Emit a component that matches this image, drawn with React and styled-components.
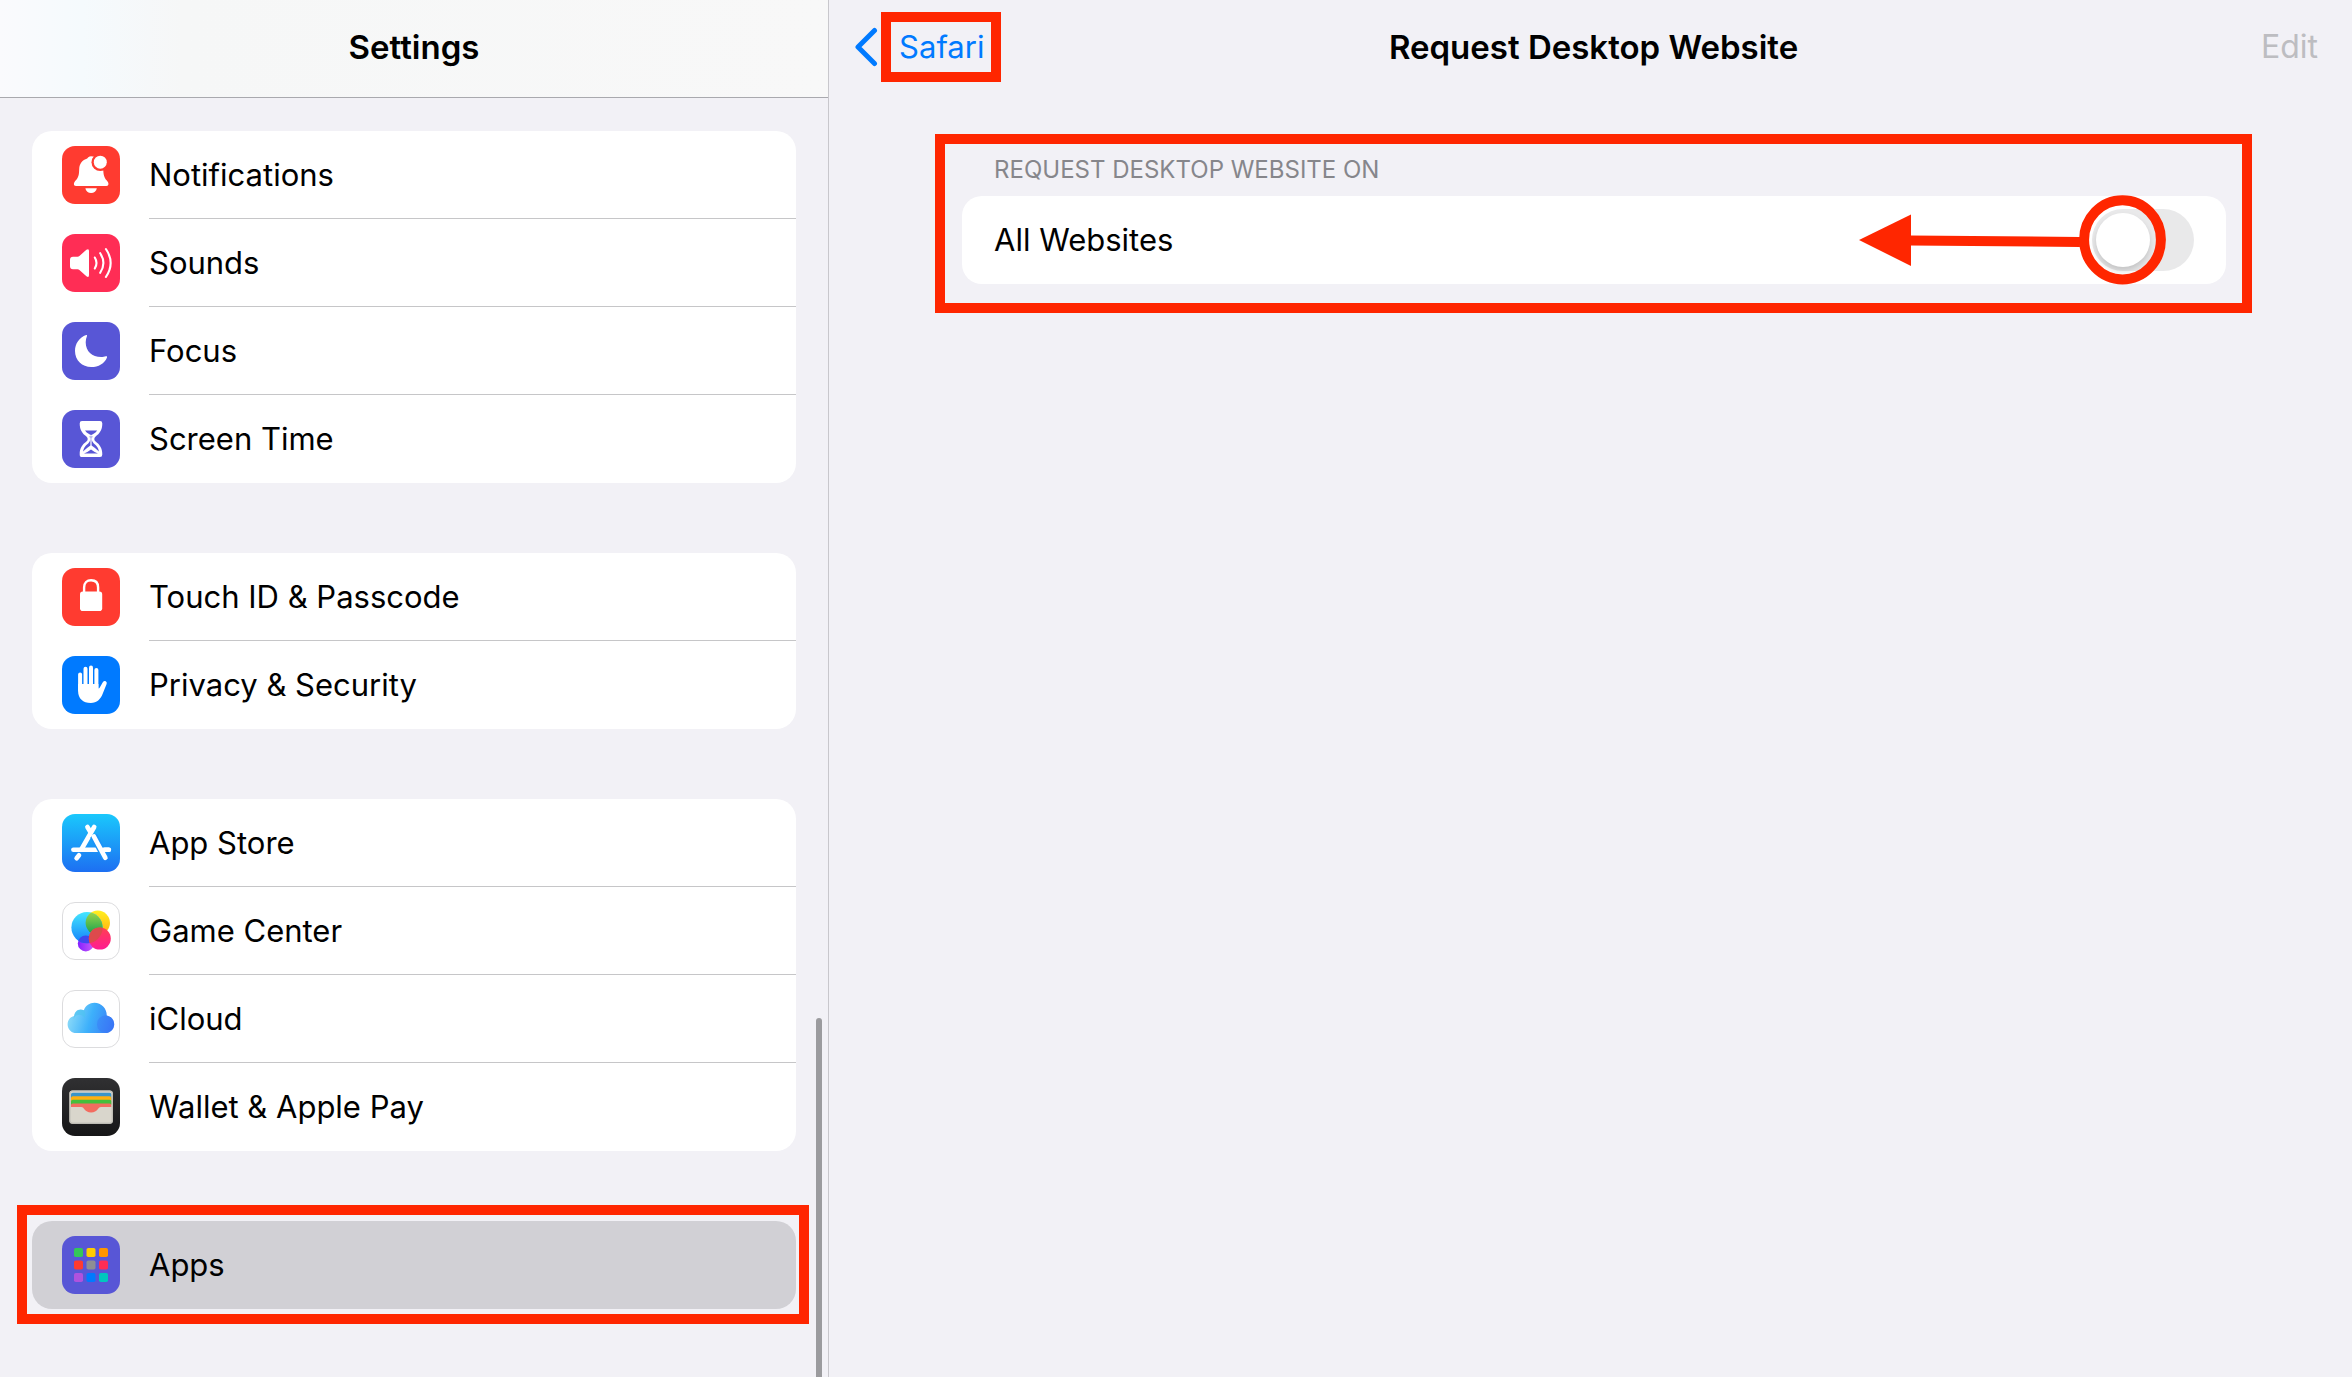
import React, { useState } from 'react'
import styled, { createGlobalStyle } from 'styled-components'

const GlobalStyle = createGlobalStyle`
    * {
        box-sizing: border-box;
    }

    body {
        margin: 0;
        background: #f2f1f6;
        color: #000;
        font-family: Inter, 'Liberation Sans', sans-serif;
        font-size: 31px;
        line-height: 40px;
    }
`

const Page = styled.div`
    display: flex;
    min-height: 100vh;
`

const Sidebar = styled.aside`
    position: relative;
    flex: 0 0 35.25%;
    border-right: 1px solid #c8c7cc;
`

const SidebarHeader = styled.header`
    display: flex;
    align-items: center;
    justify-content: center;
    height: 98px;
    padding-bottom: 4px;
    border-bottom: 1px solid #a9a9ae;
    background: linear-gradient(90deg, #fafafd 0%, #f5fafd 10%, #f6f7f7 22%, #f8f8f8 100%);
`

const Title = styled.h1`
    margin: 0;
    font-size: 33px;
    font-weight: 600;
    line-height: 40px;
`

const Menu = styled.nav`
    display: flex;
    flex-direction: column;
    gap: 70px;
    padding: 33px 32px 68px;
`

const Group = styled.ul`
    position: relative;
    margin: 0;
    padding: 0;
    list-style: none;
    border-radius: 20px;
    background: ${props => (props.$selected ? '#d1d0d5' : '#fff')};
`

const ItemLink = styled.a`
    display: flex;
    align-items: center;
    gap: 29px;
    height: 88px;
    padding-left: 30px;
    color: inherit;
    text-decoration: none;
`

const ItemLabel = styled.span`
    display: flex;
    flex: 1;
    align-items: center;
    align-self: stretch;
    border-bottom: ${props => (props.$last ? '0' : '1px solid #c6c6c8')};
`

const IconBox = styled.svg`
    flex: none;
    width: 58px;
    height: 58px;
`

const ScrollThumb = styled.div`
    position: absolute;
    top: 1018px;
    right: 6px;
    bottom: 0;
    width: 6px;
    border-radius: 3px 3px 0 0;
    background: #9b9b9e;
`

const Main = styled.main`
    flex: 1;
    min-width: 0;
`

const Toolbar = styled.header`
    display: grid;
    grid-template-columns: 1fr auto 1fr;
    align-items: center;
    height: 94px;
    padding: 0 34px 0 40px;
`

const BackLink = styled.a`
    display: flex;
    align-items: center;
    justify-self: start;
    gap: 20px;
    margin-left: -14px;
    color: #007aff;
    text-decoration: none;
`

const Chevron = styled.svg`
    width: 24px;
    height: 40px;
`

const Marked = styled.span`
    position: relative;
`

const EditButton = styled.button`
    justify-self: end;
    padding: 0;
    border: 0;
    background: none;
    font: inherit;
    font-size: 32px;

    &:disabled {
        color: #bdbdc1;
    }
`

const Section = styled.section`
    position: relative;
    margin: 60px 126px 0 133px;
`

const SectionTitle = styled.h2`
    margin: 0;
    padding: 0 32px 10px;
    color: #86868b;
    font-size: 24px;
    font-weight: 400;
    line-height: 32px;
    text-transform: uppercase;
`

const Card = styled.div`
    position: relative;
    display: flex;
    align-items: center;
    justify-content: space-between;
    height: 88px;
    padding: 0 32px;
    border-radius: 20px;
    background: #fff;
`

const Switch = styled.input`
    appearance: none;
    width: 102px;
    height: 62px;
    margin: 0;
    padding: 4px;
    border-radius: 31px;
    background: ${props => (props.checked ? '#34c759' : '#e9e9ea')};

    &::before {
        content: '';
        display: block;
        width: 54px;
        height: 54px;
        margin-left: ${props => (props.checked ? '40px' : '0')};
        border-radius: 50%;
        background: #fff;
        box-shadow: 0 4px 6px rgba(0, 0, 0, 0.16);
    }
`

// red box drawn over the part that the reader has to tap
const Highlight = styled.span`
    position: absolute;
    inset: ${props => props.$inset};
    border: 10px solid #ff2600;
    pointer-events: none;
`

const SwipeArrow = styled.svg`
    position: absolute;
    top: -1px;
    right: 60px;
    width: 308px;
    height: 90px;
    pointer-events: none;
`

const Icon = ({ color, children }) => (
    <IconBox viewBox="0 0 58 58" aria-hidden="true">
        <rect width="58" height="58" rx="13" fill={color} />
        {children}
    </IconBox>
)

const BellIcon = () => (
    <Icon color="#ff3b30">
        <path
            fill="#fff"
            d="M29 10.2C27 10.2 26 11.2 25.2 12.6C20.4 14 17.4 18 17.2 23C17 29 16.6 31.4 13.6 34.6C11.4 37 11.2 40 14 40H44.4C47.2 40 47 37 44.8 34.6C42 31.4 41.5 29 41.2 23L38 12L31 10.4Z"
        />
        <path fill="#fff" d="M23.4 42.3H34.8C34.4 45.2 32 47 29.1 47C26.2 47 23.8 45.2 23.4 42.3Z" />
        <circle cx="38.3" cy="16.2" r="8.8" fill="#ff3b30" />
        <circle cx="38.3" cy="16.2" r="6.5" fill="#fff" />
    </Icon>
)

const SpeakerIcon = () => (
    <Icon color="#ff2d55">
        <path
            fill="#fff"
            d="M11 22.7H15.6Q16.6 22.7 17.4 22L24.4 15.8Q27 14 27 17V41Q27 44 24.4 42.2L17.4 36Q16.6 35.2 15.6 35.2H11Q8 35.2 8 32.2V25.7Q8 22.7 11 22.7Z"
        />
        <g fill="none" stroke="#fff" strokeWidth="2.1" strokeLinecap="round">
            <path d="M32.8 23.5Q36.2 29 32.8 34.5" />
            <path d="M38.2 19.2Q44.6 29 38.2 38.8" />
            <path d="M43.9 15Q53.4 29 43.9 43" />
        </g>
    </Icon>
)

const MoonIcon = () => (
    <Icon color="#5856d6">
        <path
            fill="#fff"
            d="M24.2 13.1C17.3 15.6 13 21.8 13 29C13 38.3 20.2 45 29.2 45C36.4 45 42.6 41.4 45 35.4C45.3 34.5 44.8 34 43.9 34.3C42.6 34.8 40.8 35 39.2 35C30 35 23.7 29.2 23.7 20.2C23.7 18 24.2 16 25 14C25.2 13.2 24.9 12.9 24.2 13.1Z"
        />
    </Icon>
)

const HourglassIcon = () => (
    <Icon color="#5856d6">
        <path
            fill="#fff"
            d="M20 11H38Q40.3 11 40.3 13.4C40.3 20 37.6 23.4 33.6 26.4Q31 29 33.6 31.6C37.6 34.6 40.3 38 40.3 44.4Q40.3 47 38 47H20Q17.7 47 17.7 44.4C17.7 38 20.4 34.6 24.4 31.6Q27 29 24.4 26.4C20.4 23.4 17.7 20 17.7 13.4Q17.7 11 20 11Z"
        />
        <path fill="#5856d6" d="M23 20.4H35.2Q34 22.4 30.8 24.2Q29.8 24.8 29.1 25Q28.4 24.8 27.4 24.2Q24.2 22.4 23 20.4Z" />
        <path
            fill="#5856d6"
            d="M28.4 25.4V35.4Q25 37.6 21 41.6Q21.6 36.6 26.2 33.4Q29.4 30.6 27.6 26.6ZM29.6 25.4V35.4Q33 37.6 37 41.6Q36.4 36.6 31.8 33.4Q28.6 30.6 30.4 26.6Z"
        />
        <path fill="#5856d6" d="M22 43.4Q25.6 42.4 29 39.6Q32.4 42.4 36 43.4Z" />
    </Icon>
)

const LockIcon = () => (
    <Icon color="#ff3b30">
        <rect x="18" y="23.6" width="22.2" height="19.4" rx="2.8" fill="#fff" />
        <path d="M22.1 25V19.4C22.1 14.6 25 12.2 29.1 12.2C33.2 12.2 36.1 14.6 36.1 19.4V25" fill="none" stroke="#fff" strokeWidth="2.4" />
    </Icon>
)

const HandIcon = () => (
    <Icon color="#007aff">
        <g fill="none" stroke="#fff" strokeWidth="4" strokeLinecap="round">
            <path d="M18.1 18.4V34" />
            <path d="M23.5 12.8V32" />
            <path d="M29 11.4V32" />
            <path d="M34.4 14V34" />
        </g>
        <path
            fill="#fff"
            d="M16.1 28H36.4V32.2Q37.2 32.8 37.8 31.6L40.8 26.2Q42 24.4 43.8 25.2Q45.3 26.2 44.6 28L40.8 37.6C38.4 43.6 35 47 28.8 47C21 47 16.1 42.6 16.1 35Z"
        />
    </Icon>
)

const AppStoreIcon = () => (
    <Icon color="url(#storeFill)">
        <defs>
            <linearGradient id="storeFill" x1="0" y1="0" x2="0" y2="1">
                <stop offset="0" stopColor="#1ac8fc" />
                <stop offset="1" stopColor="#1d6ff2" />
            </linearGradient>
        </defs>
        <g fill="none" stroke="#fff" strokeWidth="4.6" strokeLinecap="round">
            <path d="M11.4 35.8H46.8" />
            <path d="M25.4 13L28.4 18" />
            <path d="M32.2 13L19.6 35" />
            <path d="M17 41.2L14.6 44.2" />
        </g>
        <path d="M31.6 21.8L43.4 43.8" fill="none" stroke="#1c93f8" strokeWidth="7.6" />
        <path d="M31.8 22.4L43.4 43.8" fill="none" stroke="#fff" strokeWidth="4.6" strokeLinecap="round" />
        <path d="M41.4 35.8H46.8" fill="none" stroke="#fff" strokeWidth="4.6" strokeLinecap="round" />
    </Icon>
)

const Outline = () => (
    <rect x="0.5" y="0.5" width="57" height="57" rx="12.5" fill="none" stroke="#dcdcde" />
)

const GameCenterIcon = () => (
    <Icon color="#fff">
        <defs>
            <linearGradient id="gcBlue" x1="0" y1="0" x2="0" y2="1">
                <stop offset="0" stopColor="#45e6fd" />
                <stop offset="1" stopColor="#1481fb" />
            </linearGradient>
            <linearGradient id="gcYellow" x1="0" y1="0" x2="0" y2="1">
                <stop offset="0" stopColor="#fff020" />
                <stop offset="1" stopColor="#ffac10" />
            </linearGradient>
            <linearGradient id="gcGreen" x1="0" y1="0" x2="0" y2="1">
                <stop offset="0" stopColor="#a5d84a" />
                <stop offset="1" stopColor="#13a04e" />
            </linearGradient>
            <linearGradient id="gcPink" x1="0" y1="0" x2="0" y2="1">
                <stop offset="0" stopColor="#ff3f52" />
                <stop offset="1" stopColor="#ff1c92" />
            </linearGradient>
            <linearGradient id="gcPurple" x1="0" y1="0" x2="1" y2="0">
                <stop offset="0" stopColor="#8420ff" />
                <stop offset="1" stopColor="#c95cf8" />
            </linearGradient>
            <clipPath id="gcBlueClip">
                <circle cx="25" cy="25.6" r="15.6" />
            </clipPath>
        </defs>
        <circle cx="23.8" cy="41.4" r="8" fill="url(#gcPurple)" />
        <circle cx="35.8" cy="20.8" r="12.2" fill="url(#gcYellow)" />
        <circle cx="25" cy="25.6" r="15.6" fill="url(#gcBlue)" />
        <g clipPath="url(#gcBlueClip)">
            <circle cx="35.8" cy="20.8" r="12.2" fill="url(#gcGreen)" />
            <circle cx="23.8" cy="41.4" r="8" fill="#3f48ee" />
        </g>
        <circle cx="37.8" cy="36.6" r="11" fill="url(#gcPink)" />
        <g clipPath="url(#gcBlueClip)">
            <circle cx="37.8" cy="36.6" r="11" fill="#dd4a4c" />
        </g>
        <Outline />
    </Icon>
)

const CloudIcon = () => (
    <Icon color="#fff">
        <defs>
            <linearGradient id="cloudFill" x1="0" y1="0.4" x2="1" y2="0.6">
                <stop offset="0" stopColor="#8fdcf8" />
                <stop offset="0.5" stopColor="#3db0fb" />
                <stop offset="1" stopColor="#3a7bf6" />
            </linearGradient>
        </defs>
        <path
            fill="url(#cloudFill)"
            d="M14.4 43C9.4 43 5.6 39.2 5.6 34.4C5.6 30 8.4 26.8 12.2 26C12.4 22.2 15 19.4 18.4 19.4C19.8 19.4 20.8 19.7 21.8 20.2C23.6 15.6 27.6 12.8 32.4 12.8C39.4 12.8 44.8 18.4 44.8 25.4C49 26.2 52.2 29.6 52.2 34.2C52.2 39.2 48.4 43 43.4 43Z"
        />
        <path d="M11.6 29C13 24.8 18.4 23 22.4 27.4C23.8 24.8 23.6 22 21.8 20.2C16 18 11.8 22.4 11.6 29Z" fill="#4dc3ee" opacity="0.6" />
        <circle cx="43.6" cy="34.2" r="8.6" fill="#3a6ff6" opacity="0.35" />
        <Outline />
    </Icon>
)

const WalletIcon = () => (
    <Icon color="url(#walletFill)">
        <defs>
            <linearGradient id="walletFill" x1="0" y1="0" x2="0" y2="1">
                <stop offset="0" stopColor="#303032" />
                <stop offset="1" stopColor="#161617" />
            </linearGradient>
        </defs>
        <rect x="7.4" y="12.5" width="43.4" height="33.2" rx="3" fill="#d9d6cc" />
        <path d="M9 16.6Q9 14.8 10.8 14.8H47.6Q49.4 14.8 49.4 16.6V26H9Z" fill="#3a95c9" />
        <path d="M9 20Q9 18.2 10.8 18.2H47.6Q49.4 18.2 49.4 20V26H9Z" fill="#ffb010" />
        <path d="M9 23.6Q9 21.8 10.8 21.8H47.6Q49.4 21.8 49.4 23.6V27H9Z" fill="#45bf3c" />
        <path
            d="M9 27Q9 25.4 10.8 25.4H47.6Q49.4 25.4 49.4 27V29H39C35.6 29 36 34.4 29.1 34.4C22.2 34.4 22.6 29 19.2 29H9Z"
            fill="#f36c60"
        />
        <rect x="8" y="13.1" width="42.2" height="32" rx="2.6" fill="none" stroke="#c4c2ba" strokeWidth="1.2" />
    </Icon>
)

const tiles = ['#34c759', '#ffcc00', '#ff9500', '#ff3b30', '#8e8e93', '#ff2d55', '#af52de', '#007aff', '#00c7be']

const AppsIcon = () => (
    <Icon color="#5856d6">
        {tiles.map((fill, i) => (
            <rect
                key={fill}
                x={12 + (i % 3) * 12.5}
                y={12 + Math.floor(i / 3) * 12.5}
                width="9"
                height="9"
                rx="1.8"
                fill={fill}
            />
        ))}
    </Icon>
)

const groups = [
    [
        { label: 'Notifications', icon: BellIcon },
        { label: 'Sounds', icon: SpeakerIcon },
        { label: 'Focus', icon: MoonIcon },
        { label: 'Screen Time', icon: HourglassIcon },
    ],
    [
        { label: 'Touch ID & Passcode', icon: LockIcon },
        { label: 'Privacy & Security', icon: HandIcon },
    ],
    [
        { label: 'App Store', icon: AppStoreIcon },
        { label: 'Game Center', icon: GameCenterIcon },
        { label: 'iCloud', icon: CloudIcon },
        { label: 'Wallet & Apple Pay', icon: WalletIcon },
    ],
    [{ label: 'Apps', icon: AppsIcon, selected: true }],
]

function App() {
    const [allWebsites, setAllWebsites] = useState(false)

    return (
        <Page>
            <GlobalStyle />

            <Sidebar>
                <SidebarHeader>
                    <Title>Settings</Title>
                </SidebarHeader>
                <Menu>
                    {groups.map(items => (
                        <Group key={items[0].label} $selected={items[0].selected}>
                            {items.map(({ label, icon: ItemIcon, selected }, i) => (
                                <li key={label}>
                                    <ItemLink href="#">
                                        <ItemIcon />
                                        <ItemLabel $last={i === items.length - 1}>{label}</ItemLabel>
                                    </ItemLink>
                                    {selected && <Highlight $inset="-16px -13px -15px -15px" />}
                                </li>
                            ))}
                        </Group>
                    ))}
                </Menu>
                <ScrollThumb />
            </Sidebar>

            <Main>
                <Toolbar>
                    <BackLink href="#">
                        <Chevron viewBox="0 0 24 40" aria-hidden="true">
                            <path
                                d="M19.5 3.5L3 20L19.5 36.5"
                                fill="none"
                                stroke="#007aff"
                                strokeWidth="5"
                                strokeLinecap="round"
                                strokeLinejoin="round"
                            />
                        </Chevron>
                        <Marked>
                            Safari
                            <Highlight $inset="-15px -17px -15px -18px" />
                        </Marked>
                    </BackLink>
                    <Title>Request Desktop Website</Title>
                    <EditButton disabled>Edit</EditButton>
                </Toolbar>

                <Section>
                    <SectionTitle>Request Desktop Website On</SectionTitle>
                    <Card>
                        <label htmlFor="all-websites">All Websites</label>
                        <Switch
                            id="all-websites"
                            type="checkbox"
                            role="switch"
                            checked={allWebsites}
                            onChange={event => setAllWebsites(event.target.checked)}
                        />
                        <SwipeArrow viewBox="0 0 308 90" aria-hidden="true">
                            <path d="M52 45.5L222 47" stroke="#ff2600" strokeWidth="10" />
                            <path d="M1 45L53 19.5V71Z" fill="#ff2600" />
                            <ellipse cx="264.5" cy="44.8" rx="38.4" ry="39.6" fill="none" stroke="#ff2600" strokeWidth="10" />
                        </SwipeArrow>
                    </Card>
                    <Highlight $inset="-20px -26px -29px -27px" />
                </Section>
            </Main>
        </Page>
    )
}

export default App
